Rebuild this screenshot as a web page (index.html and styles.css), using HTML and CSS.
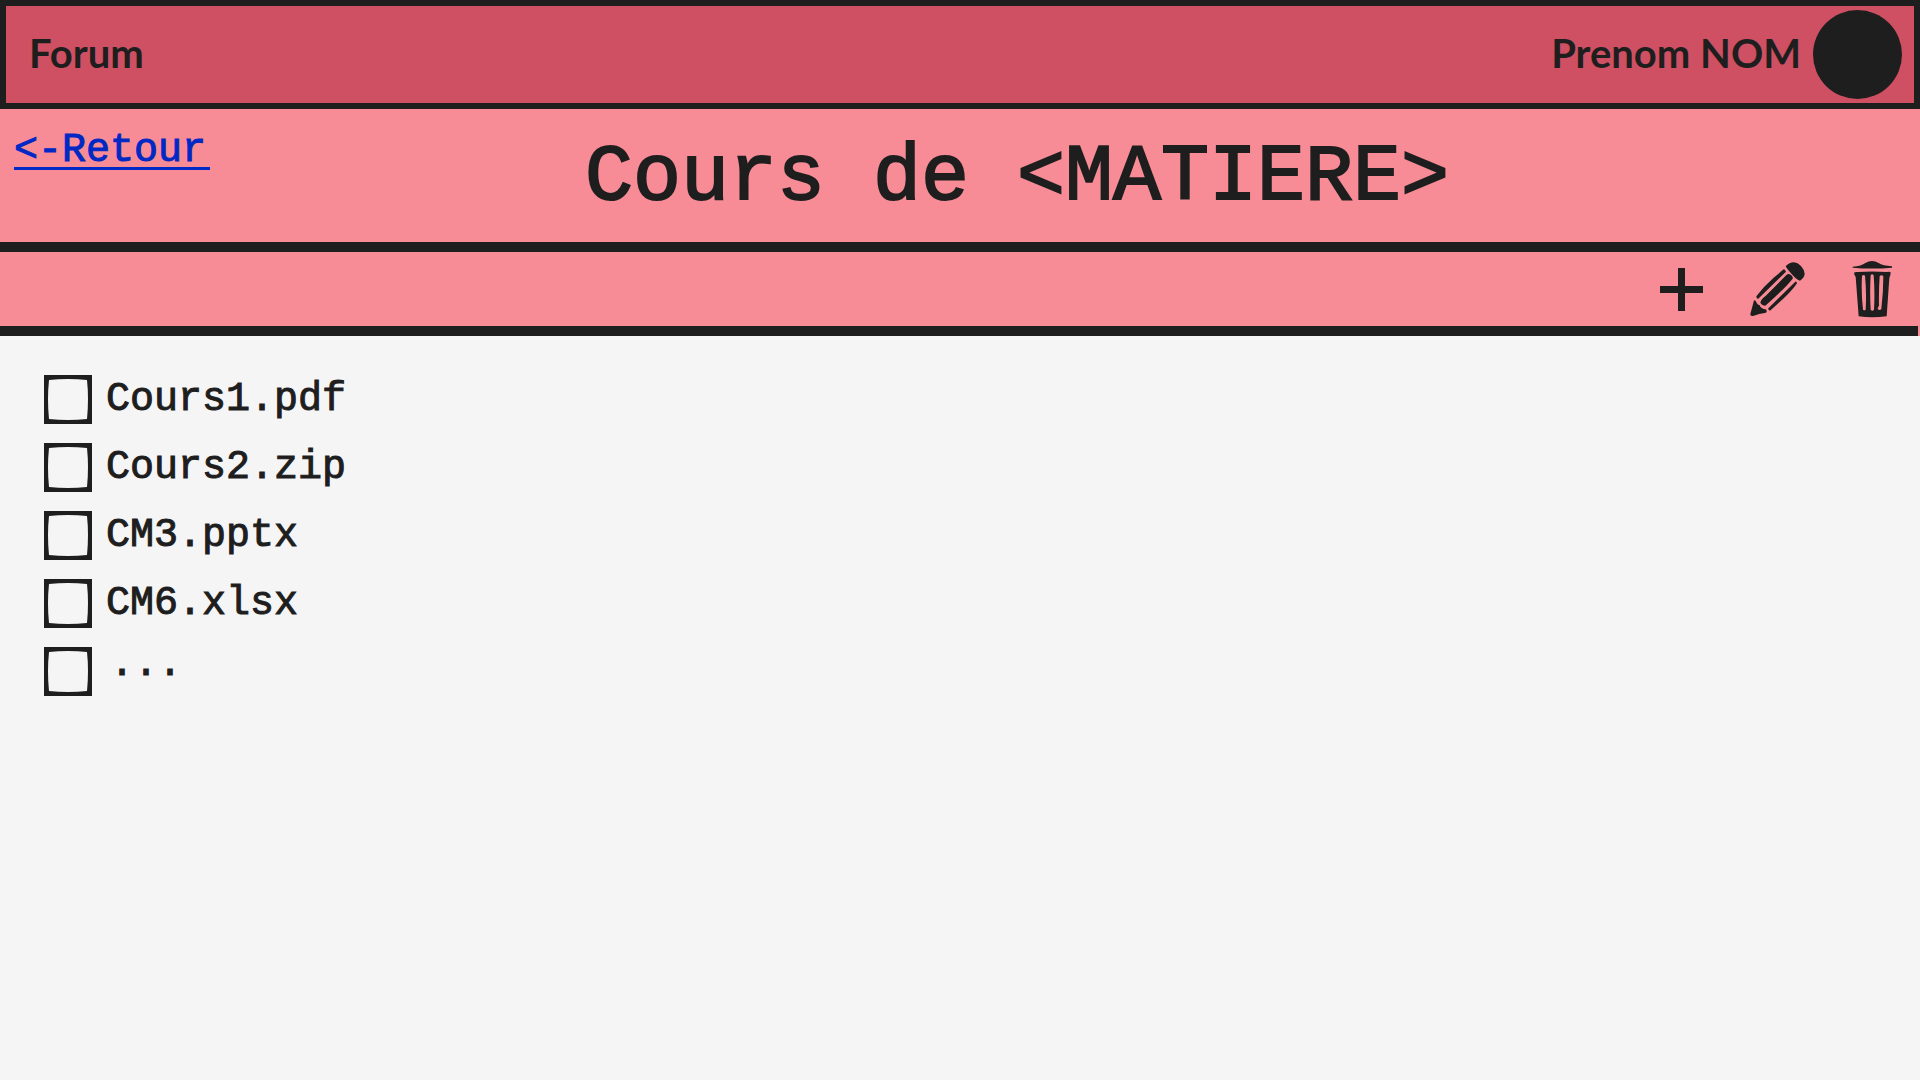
FILE: index.html
```html
<!DOCTYPE html>
<html lang="fr">
<head>
  <meta charset="utf-8">
  <meta name="viewport" content="width=device-width, initial-scale=1">
  <title>Cours</title>
  <link rel="stylesheet" href="styles.css">
</head>
<body>
  <header class="topbar">
    <a class="topbar-link" href="#forum">Forum</a>
    <a class="profile" href="#profil">
      <span class="profile-name">Prenom NOM</span>
      <span class="avatar"></span>
    </a>
  </header>

  <section class="heading">
    <a class="back" href="#retour">&lt;-Retour</a>
    <h1 class="title">Cours de &lt;MATIERE&gt;</h1>
  </section>

  <div class="toolbar">
    <div class="tools">
      <button class="tool" type="button" aria-label="Ajouter">
        <svg width="43" height="43" viewBox="0 0 43 43"><path d="M18 0h7v18h18v7H25v18h-7V25H0v-7h18z"/></svg>
      </button>
      <button class="tool" type="button" aria-label="Modifier">
        <svg width="55" height="55" viewBox="334 80 165 165">
          <path d="M441 93Q452 81 466 81Q477 82 487 92Q498 104 498 116Q496 129 484 136Q474 133 461 118Q446 103 441 93Z"/>
          <path d="M435 102Q439 102 442 109L358 191Q353 189 353 183Q375 153 405 127Z"/>
          <path d="M443 119Q450 113 457 119Q464 125 462 130Q440 158 380 211Q370 211 365 202Q367 192 383 180Z"/>
          <path d="M470 139Q474 138 475 144Q461 165 432 192L394 226Q388 225 389 219Z"/>
          <path d="M346 195Q352 194 354 203Q357 208 363 210Q367 221 381 222Q387 228 382 232Q361 235 343 242Q334 243 335 236Q341 215 346 195Z"/>
        </svg>
      </button>
      <button class="tool" type="button" aria-label="Supprimer">
        <svg width="40" height="58" viewBox="637 73 120 174">
          <path d="M639 93Q666 91 677 82Q697 70 717 82Q729 90 757 92V96Q697 101 639 96Z"/>
          <path fill-rule="evenodd" d="M643 111Q646 108 655 109Q697 106 741 109Q750 107 753 110Q753 120 749 127L741 242Q697 248 657 242L648 124Q644 118 643 111ZM667 121Q671 115 676 120Q681 170 678 222Q675 226 670 222Q664 170 667 121ZM693 119Q697 112 702 119Q706 170 703 222Q698 228 693 222Q690 170 693 119ZM720 121Q726 116 731 122Q731 170 725 220Q720 226 714 220Q715 213 718 210Q717 165 720 121Z"/>
        </svg>
      </button>
    </div>
    <hr class="rule">
  </div>

  <main>
    <ul class="files">
      <li><label class="file"><input class="check" type="checkbox"><span>Cours1.pdf</span></label></li>
      <li><label class="file"><input class="check" type="checkbox"><span>Cours2.zip</span></label></li>
      <li><label class="file"><input class="check" type="checkbox"><span>CM3.pptx</span></label></li>
      <li><label class="file"><input class="check" type="checkbox"><span>CM6.xlsx</span></label></li>
      <li><label class="file file-more"><input class="check" type="checkbox"><span>...</span></label></li>
    </ul>
  </main>
</body>
</html>
```

FILE: styles.css
```css
:root {
  --ink: #1e1e1e;
  --rose: #f88c96;
  --mono: "Liberation Mono", monospace;
}

* {
  box-sizing: border-box;
}

body {
  margin: 0;
  background: #f5f5f5;
  color: var(--ink);
  font-family: var(--mono);
  font-size: 40px;
  line-height: 48px;
}

.topbar {
  display: flex;
  align-items: center;
  justify-content: space-between;
  padding: 4px 12px 4px 23px;
  border: 6px solid var(--ink);
  background: #ce5062;
  font-family: Lato, sans-serif;
  font-weight: 700;
}

.topbar-link,
.profile {
  color: inherit;
  text-decoration: none;
}

.topbar-link,
.profile-name {
  padding-bottom: 4px;
}

.profile {
  display: flex;
  align-items: center;
  gap: 12px;
}

.avatar {
  width: 89px;
  height: 89px;
  border-radius: 50%;
  background: var(--ink);
}

.heading {
  display: flex;
  align-items: flex-start;
  padding: 20px 96px 16px 14px;
  border-bottom: 10px solid var(--ink);
  background: var(--rose);
}

.back {
  width: 196px;
  padding-top: 6px;
  border-bottom: 3px solid currentColor;
  color: #0028c4;
  line-height: 32px;
  text-decoration: none;
  -webkit-text-stroke: 1px currentColor;
}

.title {
  flex: 1;
  margin: 0;
  font-size: 80px;
  font-weight: 400;
  line-height: 97px;
  text-align: center;
  -webkit-text-stroke: 2px currentColor;
}

.toolbar {
  background: var(--rose);
}

.tools {
  display: flex;
  align-items: center;
  justify-content: flex-end;
  gap: 47px;
  padding: 8px 28px 8px 0;
}

.tool {
  display: flex;
  padding: 0;
  border: 0;
  background: none;
  color: inherit;
  cursor: pointer;
}

.tool svg {
  fill: currentColor;
}

.rule {
  height: 10px;
  margin: 0 2px 0 0;
  border: 0;
  background: var(--ink);
}

.files {
  display: flex;
  flex-direction: column;
  gap: 19px;
  margin: 0;
  padding: 39px 44px;
  list-style: none;
}

.file {
  display: inline-flex;
  align-items: center;
  gap: 14px;
  vertical-align: top;
  -webkit-text-stroke: 1px currentColor;
}

.file-more {
  align-items: flex-start;
  gap: 18px;
  line-height: 36px;
}

.check {
  width: 48px;
  height: 49px;
  margin: 0;
  appearance: none;
  background: url("data:image/svg+xml,%3Csvg xmlns='http://www.w3.org/2000/svg' viewBox='0 0 48 49'%3E%3Cpath fill='%231e1e1e' fill-rule='evenodd' d='M0 0H48V49H0ZM5 5Q24 3 43 5Q45 24 43 44Q24 46 5 44Q3 24 5 5Z'/%3E%3C/svg%3E") no-repeat;
}

.check:checked {
  background-color: var(--ink);
}
```
